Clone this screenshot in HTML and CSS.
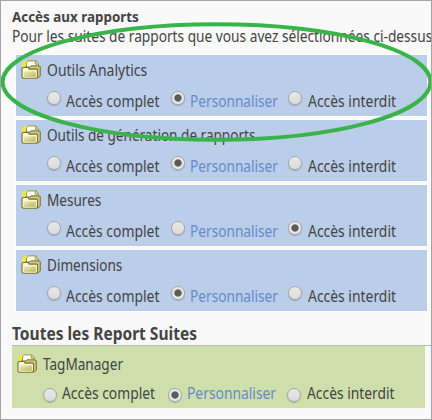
FILE: index.html
```html
<!DOCTYPE html>
<html lang="fr">
<head>
<meta charset="utf-8">
<title>Accès aux rapports</title>
<link rel="stylesheet" href="styles.css">
</head>
<body>
<svg class="defs" width="0" height="0">
  <defs>
    <linearGradient id="fold" x1="0" y1="0" x2="1" y2="1"><stop offset="0" stop-color="#f0eec0"/><stop offset="1" stop-color="#b9b55a"/></linearGradient>
    <symbol id="folder" viewBox="0 0 20 19">
      <path d="M1 7V3L4 .8h3V7z" fill="#efe63f"/>
      <path d="M5.5 8V2.8L7.5.9H15l2.5 3V8z" fill="#fffff2" stroke="#99944f" stroke-width="1"/>
      <path d="M14.3 1v3.2h3" fill="#dcd99a" stroke="#8d883e" stroke-width=".8"/>
      <path d="M4 16V7h5l1-1.2h7l2.3.8v9.3l-2 2z" fill="#c9c67c" stroke="#78732d" stroke-width="1"/>
      <path d="M1 17.2V8.6L2 7.5h5l1.2 1.6h7.5l.8.8v7.3l-1 1H2z" fill="#faf8d6" stroke="#78732d" stroke-width="1.1"/>
      <path d="M2.7 11.3h12.1v5.5H2.7z" fill="url(#fold)"/>
    </symbol>
  </defs>
</svg>
<main class="panel">
  <h2 class="title"><span>Accès aux rapports</span></h2>
  <p class="intro"><span>Pour les suites de rapports que vous avez sélectionnées ci-dessus</span></p>
  <div class="groups">
    <section class="group">
      <div class="head"><svg class="icon"><use href="#folder"/></svg><span class="wide">Outils Analytics</span></div>
      <div class="options"><label><i class="radio"></i><span>Accès complet</span></label><label class="custom"><i class="radio on"></i><span>Personnaliser</span></label><label><i class="radio"></i><span>Accès interdit</span></label></div>
    </section>
    <section class="group">
      <div class="head"><svg class="icon"><use href="#folder"/></svg><span>Outils de génération de rapports</span></div>
      <div class="options"><label><i class="radio"></i><span>Accès complet</span></label><label class="custom"><i class="radio on"></i><span>Personnaliser</span></label><label><i class="radio"></i><span>Accès interdit</span></label></div>
    </section>
    <section class="group">
      <div class="head"><svg class="icon"><use href="#folder"/></svg><span>Mesures</span></div>
      <div class="options"><label><i class="radio"></i><span>Accès complet</span></label><label class="custom"><i class="radio"></i><span>Personnaliser</span></label><label><i class="radio on"></i><span>Accès interdit</span></label></div>
    </section>
    <section class="group">
      <div class="head"><svg class="icon"><use href="#folder"/></svg><span>Dimensions</span></div>
      <div class="options"><label><i class="radio"></i><span>Accès complet</span></label><label class="custom"><i class="radio on"></i><span>Personnaliser</span></label><label><i class="radio"></i><span>Accès interdit</span></label></div>
    </section>
  </div>
  <h3 class="subtitle"><span>Toutes les Report Suites</span></h3>
  <div class="suites">
    <section class="group green">
      <div class="head"><svg class="icon"><use href="#folder"/></svg><span>TagManager</span></div>
      <div class="options"><label><i class="radio"></i><span>Accès complet</span></label><label class="custom"><i class="radio on"></i><span>Personnaliser</span></label><label><i class="radio"></i><span>Accès interdit</span></label></div>
    </section>
  </div>
  <svg class="highlight" viewBox="0 0 432 420"><ellipse cx="216.5" cy="82" rx="214" ry="57.8"/></svg>
</main>
</body>
</html>
```
FILE: styles.css
```css
* { box-sizing: border-box; }
body { margin: 0; }
.defs { position: absolute; }
.panel {
  position: relative;
  width: 432px;
  height: 420px;
  border: 1px solid #a5a5a5;
  background: #f9f9f9;
  overflow: hidden;
  color: #444;
  font: 15.5px/20px "Noto Sans", sans-serif;
  white-space: nowrap;
}
.panel span { display: inline-block; transform-origin: 0 50%; transform: scaleX(.876); }
.panel .wide { transform: scaleX(.9); }
.title, .intro, .subtitle { margin: 0 0 0 11px; }
.title { height: 24px; padding-top: 6px; font-size: 15px; line-height: 18px; }
.panel .title span { transform: scaleX(.893); }
.intro { height: 30px; padding-top: 2px; line-height: 18px; }
.panel .intro span { transform: scaleX(.884); }
.groups { display: grid; gap: 4px; margin: 0 4px 0 15px; }
.group { height: 61px; background: #bacde9; box-shadow: 0 0 0 1px #fff; }
.head { display: flex; height: 31px; padding: 5px 0 0 5px; }
.icon { flex: none; width: 20px; height: 19px; margin-right: 6px; }
.options { display: grid; grid-template-columns: 124px 117px 1fr; padding-left: 31px; }
.options label { display: flex; height: 22px; padding-top: 5px; }
.radio {
  flex: none;
  width: 14px;
  height: 14px;
  margin: 0 5px 0 0;
  border: 1px solid #a8a8a8;
  border-radius: 50%;
  background: linear-gradient(#e8e8e8, #dcdcdc);
  box-shadow: 0 1px 1px #0003;
}
.radio.on { background: radial-gradient(circle, #5b5b5b 3.2px, #e8e8e8 4.1px); }
.panel .options span { transform: scaleX(.897); }
.panel .custom span { color: #668aca; transform: scaleX(.882); }
.options label + label + label span { margin-left: 1px; }
.subtitle { height: 34px; padding-top: 12px; font-size: 17px; line-height: 22px; }
.panel .subtitle span { transform: scaleX(.913); }
.suites { margin-left: 11px; border-top: 1px solid #bbb; }
.green { width: 413px; height: 62px; background: #cedfac; box-shadow: none; }
.green .head { height: 32px; padding-top: 8px; }
.green .options { grid-template-columns: 125px 118.5px 1fr; }
.green .options label { padding-top: 5px; }
.green .options span { transform: scaleX(.893); }
.green .radio { margin-top: 5px; }
.highlight { position: absolute; left: -1px; top: -1px; width: 432px; height: 420px; }
.highlight ellipse { fill: none; stroke: #39b44a; stroke-width: 4; }
```
